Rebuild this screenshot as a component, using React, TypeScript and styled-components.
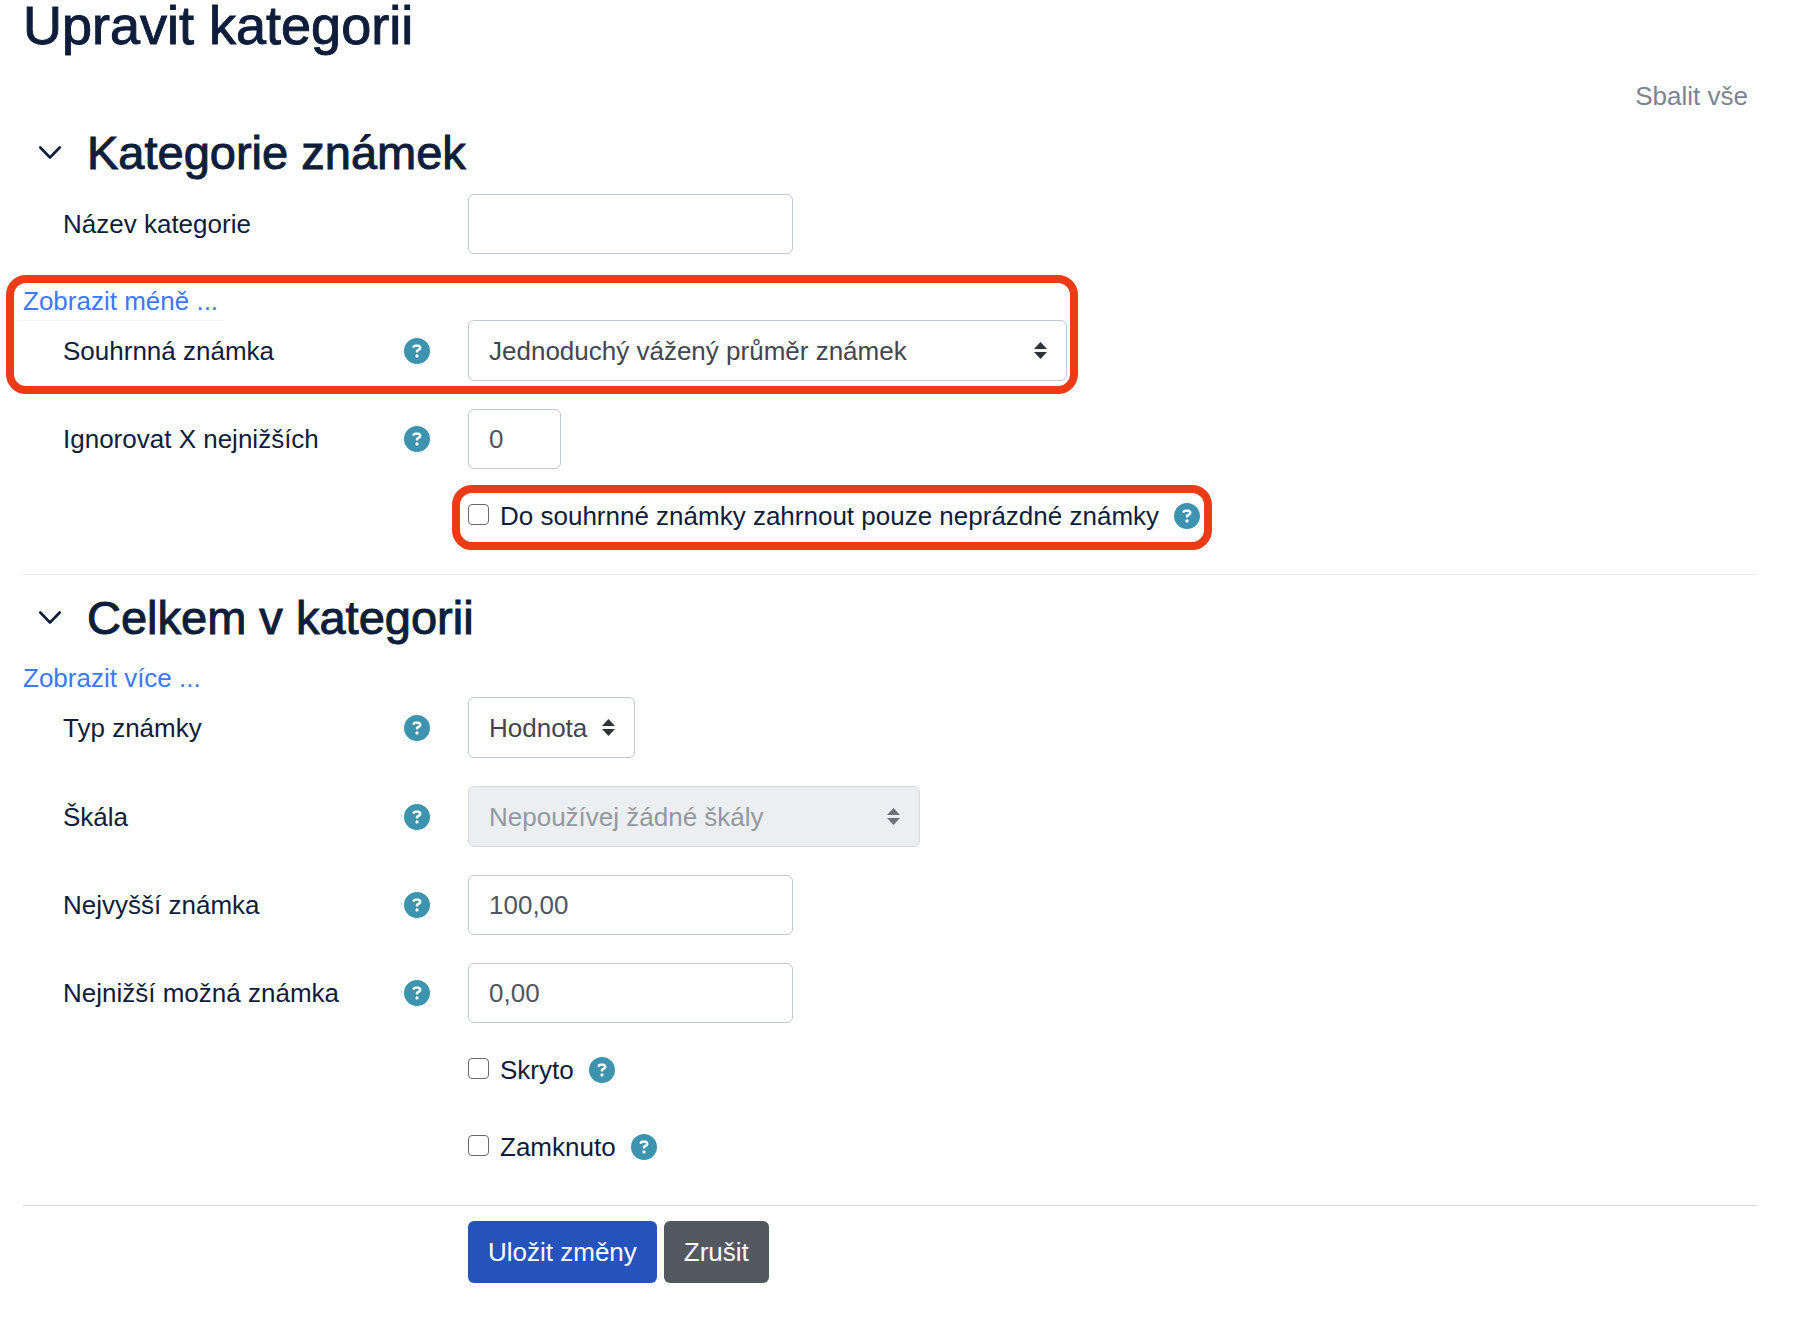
import React, { useId, useState } from "react";
import styled, { createGlobalStyle } from "styled-components";
import { FaCircleQuestion } from "react-icons/fa6";

const GlobalStyle = createGlobalStyle`
  *, *::before, *::after { box-sizing: border-box; }
  body {
    margin: 0;
    background: #ffffff;
    color: #0e1d3a;
    font-family: "Helvetica Neue", "Liberation Sans", Arial, sans-serif;
    font-size: 26px;
    line-height: 38px;
  }
  button, input, select { font: inherit; }
`;

const Page = styled.main`
  padding: 0 43px 38px 23px;
`;

const Title = styled.h1`
  margin: 0;
  font-size: 54px;
  line-height: 51px;
  font-weight: 400;
  -webkit-text-stroke: 1px currentColor;
`;

const Toolbar = styled.div`
  display: flex;
  justify-content: flex-end;
  padding: 26px 9px 0 0;
`;

const QuietLink = styled.a`
  color: #7d8491;
  text-decoration: none;
`;

const Section = styled.section<{ $strong?: boolean }>`
  padding-top: 10px;
  border-bottom: 1px solid ${(p) => (p.$strong ? "#d9dbde" : "#ececee")};

  & + & {
    padding-top: 15px;
  }
`;

const SectionHead = styled.div`
  display: flex;
  align-items: center;
  gap: 26px;
  padding-left: 16px;
  margin-bottom: 13px;
`;

const Toggle = styled.button`
  display: flex;
  padding: 0;
  border: 0;
  background: none;
  color: inherit;
  cursor: pointer;
`;

const SectionTitle = styled.h2`
  margin: 0;
  font-size: 47px;
  line-height: 56px;
  font-weight: 400;
  -webkit-text-stroke: 1px currentColor;
`;

const MoreLink = styled.a<{ $underlined?: boolean }>`
  display: block;
  width: fit-content;
  margin-left: -6px;
  padding: 0 6px;
  color: #3d78fd;
  text-decoration: none;
  box-shadow: ${(p) => (p.$underlined ? "0 1px 0 #f4f4f5" : "none")};
`;

const Row = styled.div`
  display: grid;
  grid-template-columns: 445px auto;
  justify-content: start;
  align-items: center;
  margin-bottom: 28px;
`;

const LabelCell = styled.div`
  display: flex;
  align-items: center;
  justify-content: space-between;
  padding: 0 38px 0 40px;
`;

const HelpButton = styled.button`
  display: flex;
  padding: 0;
  border: 0;
  border-radius: 50%;
  background: none;
  color: #3e94af;
  cursor: pointer;
`;

const TextInput = styled.input<{ $width: number }>`
  width: ${(p) => p.$width}px;
  height: 60px;
  padding: 0 20px;
  border: 1px solid #c3c9d3;
  border-radius: 6px;
  background: #ffffff;
  color: #50555f;
`;

const SelectBox = styled.span<{ $width: number; $muted?: boolean }>`
  position: relative;
  display: block;
  width: ${(p) => p.$width}px;
  color: ${(p) => (p.$muted ? "#6e7378" : "#2f3338")};

  svg {
    position: absolute;
    top: 22px;
    right: 20px;
    pointer-events: none;
  }
`;

const NativeSelect = styled.select`
  display: block;
  appearance: none;
  width: 100%;
  height: 61px;
  padding: 0 40px 0 20px;
  border: 1px solid #c3c9d3;
  border-radius: 6px;
  background: #ffffff;
  color: #41464f;

  &:disabled {
    border-color: #d6dade;
    background: #ebeff2;
    color: #93989f;
    opacity: 1;
  }
`;

const CheckLine = styled.div`
  position: relative;
  display: flex;
  align-items: center;
  width: fit-content;
  margin: 0 0 39px 445px;

  label {
    margin: 0 15px 0 11px;
  }
`;

const Checkbox = styled.input`
  appearance: none;
  width: 21px;
  height: 21px;
  margin: 0 0 3px;
  border: 1px solid #6a6a6c;
  border-radius: 4px;
  background: #ffffff;

  &:checked {
    background: #2653bb;
  }
`;

const Group = styled.div`
  position: relative;
  width: fit-content;
  margin-bottom: 28px;

  ${Row} {
    margin-bottom: 0;
  }
`;

const Highlight = styled.span<{ $inset: string }>`
  position: absolute;
  inset: ${(p) => p.$inset};
  border: 8px solid #ed3b18;
  border-radius: 20px;
  pointer-events: none;
`;

const Actions = styled.div`
  display: flex;
  gap: 7px;
  padding: 15px 0 0 445px;
`;

const ActionButton = styled.button<{ $primary?: boolean }>`
  height: 62px;
  padding: 0 20px;
  border: 0;
  border-radius: 6px;
  background: ${(p) => (p.$primary ? "#2653bb" : "#545860")};
  color: #ffffff;
  cursor: pointer;
`;

function Help({ topic }: { topic: string }) {
  return (
    <HelpButton type="button" aria-label={`Nápověda: ${topic}`}>
      <FaCircleQuestion size={26} />
    </HelpButton>
  );
}

function Heading({ children }: { children: string }) {
  return (
    <SectionHead>
      <Toggle type="button" aria-label={children} aria-expanded>
        <svg width="22" height="14" viewBox="0 0 22 14" fill="none" stroke="currentColor" strokeWidth="2.6" strokeLinecap="round" strokeLinejoin="round">
          <path d="M1.3 1.5 11 11.5 20.7 1.5" />
        </svg>
      </Toggle>
      <SectionTitle>{children}</SectionTitle>
    </SectionHead>
  );
}

function InputField(props: { label: string; value?: string; width: number; help?: boolean }) {
  const id = useId();
  const [value, setValue] = useState(props.value ?? "");
  return (
    <Row>
      <LabelCell>
        <label htmlFor={id}>{props.label}</label>
        {props.help && <Help topic={props.label} />}
      </LabelCell>
      <TextInput id={id} type="text" $width={props.width} value={value} onChange={(e) => setValue(e.target.value)} />
    </Row>
  );
}

function SelectField(props: { label: string; option: string; width: number; disabled?: boolean }) {
  const id = useId();
  return (
    <Row>
      <LabelCell>
        <label htmlFor={id}>{props.label}</label>
        <Help topic={props.label} />
      </LabelCell>
      <SelectBox $width={props.width} $muted={props.disabled}>
        <NativeSelect id={id} disabled={props.disabled}>
          <option>{props.option}</option>
        </NativeSelect>
        <svg width="13" height="17" viewBox="0 0 13 17" fill="currentColor" aria-hidden>
          <path d="M6.5 0 13 7H0z" />
          <path d="M6.5 17 13 10H0z" />
        </svg>
      </SelectBox>
    </Row>
  );
}

function CheckField({ label, highlight }: { label: string; highlight?: string }) {
  const id = useId();
  return (
    <CheckLine>
      <Checkbox id={id} type="checkbox" />
      <label htmlFor={id}>{label}</label>
      <Help topic={label} />
      {highlight && <Highlight $inset={highlight} />}
    </CheckLine>
  );
}

export default function App() {
  return (
    <>
      <GlobalStyle />
      <Page>
        <Title>Upravit kategorii</Title>
        <Toolbar>
          <QuietLink href="#">Sbalit vše</QuietLink>
        </Toolbar>
        <form onSubmit={(e) => e.preventDefault()}>
          <Section>
            <Heading>Kategorie známek</Heading>
            <InputField label="Název kategorie" width={325} />
            <Group>
              <MoreLink href="#" $underlined>Zobrazit méně ...</MoreLink>
              <SelectField label="Souhrnná známka" option="Jednoduchý vážený průměr známek" width={599} />
              <Highlight $inset="-7px -11px -13px -17px" />
            </Group>
            <InputField label="Ignorovat X nejnižších" value="0" width={93} help />
            <CheckField label="Do souhrnné známky zahrnout pouze neprázdné známky" highlight="-12px -12px -15px -16px" />
          </Section>
          <Section $strong>
            <Heading>Celkem v kategorii</Heading>
            <MoreLink href="#">Zobrazit více ...</MoreLink>
            <SelectField label="Typ známky" option="Hodnota" width={167} />
            <SelectField label="Škála" option="Nepoužívej žádné škály" width={452} disabled />
            <InputField label="Nejvyšší známka" value="100,00" width={325} help />
            <InputField label="Nejnižší možná známka" value="0,00" width={325} help />
            <CheckField label="Skryto" />
            <CheckField label="Zamknuto" />
          </Section>
          <Actions>
            <ActionButton type="submit" $primary>Uložit změny</ActionButton>
            <ActionButton type="button">Zrušit</ActionButton>
          </Actions>
        </form>
      </Page>
    </>
  );
}
